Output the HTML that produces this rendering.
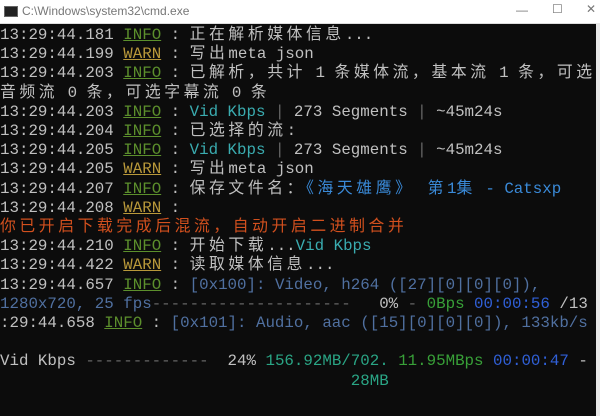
<!DOCTYPE html><html><head><meta charset="utf-8"><style>
body{margin:0;width:600px;height:416px;overflow:hidden;background:#0c0c0c;position:relative}
.tb{position:absolute;left:0;top:0;width:600px;height:23px;background:#fff;border-bottom:1px solid #ddd;font:12px "Liberation Sans",sans-serif;color:#777}
.tb .t{position:absolute;left:22px;top:4px}
.ic{position:absolute;left:4px;top:6px;width:12px;height:9px;background:#222;border:1px solid #666}
.sb{position:absolute;right:0;top:23px;width:4px;height:393px;background:#e8e8e8}
pre{position:absolute;left:0;top:26px;margin:0;font:15.8px/19.2px "Liberation Mono","Noto Sans CJK SC",monospace;color:#c0c0c0;white-space:pre}
.c{letter-spacing:3.6px}
.i{color:#5c8f2c;text-decoration:underline}
.w{color:#b8983a;text-decoration:underline}
.cy{color:#3aacb0}.bl{color:#3a8ad8}.r{color:#d2501e}.d{color:#5070a0}
.tl{color:#2aa585}.g{color:#38a038}.b{color:#3060d8}
.dk{color:#666}
</style></head><body>
<div class="tb"><div class="ic"></div><span class="t">C:\Windows\system32\cmd.exe</span><span style="position:absolute;left:516px;top:3px">—</span><span style="position:absolute;left:552px;top:2px">☐</span><span style="position:absolute;left:586px;top:2px">✕</span></div>
<pre>13:29:44.181 <span class="i">INFO</span> : <span class="c">正在解析媒体信息</span>...
13:29:44.199 <span class="w">WARN</span> : <span class="c">写出</span>meta json
13:29:44.203 <span class="i">INFO</span> : <span class="c">已解析，共计</span> 1 <span class="c">条媒体流，基本流</span> 1 <span class="c">条，可选</span>
<span class="c">音频流</span> 0 <span class="c">条，可选字幕流</span> 0 <span class="c">条</span>
13:29:44.203 <span class="i">INFO</span> : <span class="cy">Vid Kbps</span> <span class="dk">|</span> 273 Segments <span class="dk">|</span> ~45m24s
13:29:44.204 <span class="i">INFO</span> : <span class="c">已选择的流</span>:
13:29:44.205 <span class="i">INFO</span> : <span class="cy">Vid Kbps</span> <span class="dk">|</span> 273 Segments <span class="dk">|</span> ~45m24s
13:29:44.205 <span class="w">WARN</span> : <span class="c">写出</span>meta json
13:29:44.207 <span class="i">INFO</span> : <span class="c">保存文件名：</span><span class="bl"><span class="c">《海天雄鹰》 第</span>1<span class="c">集</span> - Catsxp</span>
13:29:44.208 <span class="w">WARN</span> :
<span class="r c">你已开启下载完成后混流，自动开启二进制合并</span>
13:29:44.210 <span class="i">INFO</span> : <span class="c">开始下载</span>...<span class="cy">Vid Kbps</span>
13:29:44.422 <span class="w">WARN</span> : <span class="c">读取媒体信息</span>...
13:29:44.657 <span class="i">INFO</span> : <span class="d">[0x100]: Video, h264 ([27][0][0][0]),</span>
<span class="d">1280x720, 25 fps</span><span class="dk">---------------------</span>   0% <span class="dk">-</span> <span class="g">0Bps</span> <span class="b">00:00:56</span> /13
:29:44.658 <span class="i">INFO</span> : <span class="d">[0x101]: Audio, aac ([15][0][0][0]), 133kb/s</span>

Vid Kbps <span class="dk">-------------</span>  24% <span class="tl">156.92MB/702.</span> <span class="g">11.95MBps</span> <span class="b">00:00:47</span> -
                                     <span class="tl">28MB</span></pre>
<div class="sb"></div>
</body></html>
